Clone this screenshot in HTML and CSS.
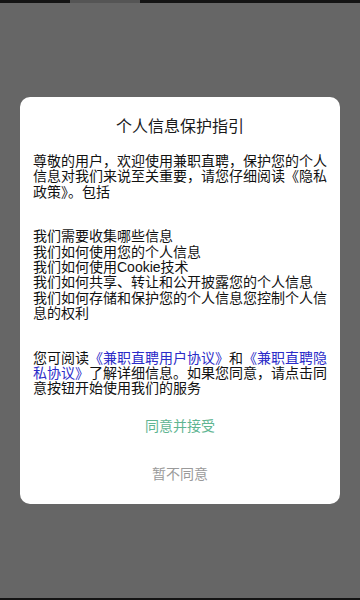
FILE: index.html
```html
<!DOCTYPE html>
<html lang="zh-CN">
<head>
    <meta charset="UTF-8">
    <meta name="viewport" content="width=device-width, initial-scale=1.0">
    <title>个人信息保护指引</title>
    <link rel="stylesheet" href="styles.css">
</head>
<body>
    <div class="top-bar">
        <span class="top-tab"></span>
    </div>

    <div class="dialog">
        <h1 class="dialog-title">个人信息保护指引</h1>

        <div class="dialog-body">
            <p>尊敬的用户，欢迎使用兼职直聘，保护您的个人信息对我们来说至关重要，请您仔细阅读《隐私政策》。包括</p>
            <p class="gap">我们需要收集哪些信息<br>我们如何使用您的个人信息<br>我们如何使用Cookie技术<br>我们如何共享、转让和公开披露您的个人信息<br>我们如何存储和保护您的个人信息您控制个人信息的权利</p>
            <p class="gap">您可阅读<a href="#" class="link">《兼职直聘用户协议》</a>和<a href="#" class="link">《兼职直聘隐私协议》</a>了解详细信息。如果您同意，请点击同意按钮开始使用我们的服务</p>
        </div>

        <div class="dialog-actions">
            <button class="btn btn-agree">同意并接受</button>
            <button class="btn btn-cancel">暂不同意</button>
        </div>
    </div>

    <div class="bottom-bar"></div>
</body>
</html>
```

FILE: styles.css
```css
* {
    margin: 0;
    padding: 0;
    box-sizing: border-box;
}

body {
    font-family: "Liberation Sans", "Noto Sans CJK SC", sans-serif;
    background: #666666;
    width: 360px;
    height: 600px;
    overflow: hidden;
    display: flex;
    flex-direction: column;
}

.top-bar {
    height: 3px;
    background: #141414;
    display: flex;
}

.top-tab {
    width: 70px;
    height: 3px;
    margin-left: 70px;
    background: #555555;
}

.dialog {
    margin: 94px 20px 0;
    background: #ffffff;
    border-radius: 10px;
    padding: 19px 13px 6px;
}

.dialog-title {
    font-size: 16px;
    font-weight: normal;
    line-height: 22px;
    text-align: center;
    color: #1a1a1a;
}

.dialog-body {
    margin-top: 16px;
    font-size: 14px;
    line-height: 15.4px;
    color: #111111;
}

.dialog-body p.gap {
    margin-top: 29px;
}

.link {
    color: #2b2bc8;
    text-decoration: none;
}

.dialog-actions {
    margin-top: 5px;
    display: flex;
    flex-direction: column;
}

.btn {
    height: 48px;
    border: none;
    background: none;
    font-family: inherit;
    font-size: 14px;
    line-height: 48px;
    text-align: center;
}

.btn-agree {
    color: #5fb592;
}

.btn-cancel {
    color: #9a9a9a;
}

.bottom-bar {
    margin-top: auto;
    height: 2px;
    background: #141414;
}
```
